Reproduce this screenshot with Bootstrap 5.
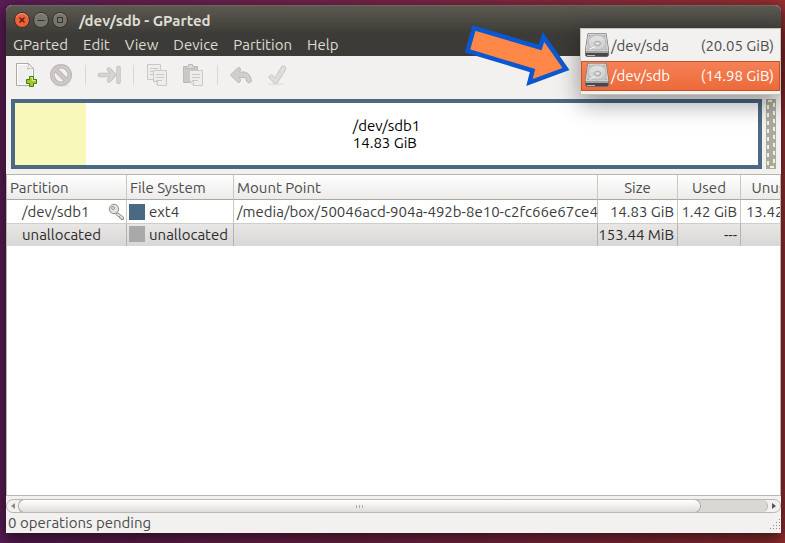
<!DOCTYPE html>
<html lang="en">
<head>
<meta charset="utf-8">
<meta name="viewport" content="width=device-width, initial-scale=1">
<title>/dev/sdb - GParted</title>
<link href="https://cdn.jsdelivr.net/npm/bootstrap@5.3.0/dist/css/bootstrap.min.css" rel="stylesheet">
<style>
  body {
    font-family: Ubuntu, "Noto Sans", sans-serif;
    font-size: 15px;
    line-height: 17px;
    color: #3c3c3c;
    background: linear-gradient(90deg, #5c1d58, #7a2548 50%, #992f31);
  }
  .desktop { padding: 5px 4px 10px 6px; overflow: hidden; }
  .app-window {
    background: #f2f1f0;
    border-radius: 6px 6px 0 0;
    box-shadow: 0 6px 18px 2px rgba(0, 0, 0, .6);
    min-width: 0;
  }
  .app-head {
    background: linear-gradient(#5c5950, #3c3b37 28px);
    border-radius: 6px 6px 0 0;
    border-top: 1px solid #6b685f;
    color: #dfdbd2;
  }
  .title-bar { height: 28px; padding: 0 8px; gap: 3px; }
  .title-bar h1 { font-size: 15px; line-height: 17px; padding-left: 8px; }
  .wm-btn, .tool-btn, .menu-btn, .scroll-btn { border: 0; background: none; color: inherit; }
  .wm-btn svg { width: 16px; height: 16px; }
  .menu-bar { height: 22px; gap: 1px; padding-bottom: 2px; }
  .menu-btn { padding: 0 7px; }
  .tool-bar { height: 38px; padding: 0 1px; }
  .tool-btn { padding: 0 6px; }
  .tool-btn svg { width: 24px; height: 24px; }
  .tool-sep { width: 1px; height: 20px; margin: 0 5px 0 6px; background: #dbd8d4; }
  .disk-map { padding: 5px; gap: 4px; }
  .disk-part { height: 70px; border: 4px solid #4b6983; background: #fff; color: #000; }
  .disk-used { width: 71px; background: #f8f8ba; }
  .disk-label { inset: 0; }
  .disk-free { width: 10px; height: 70px; }
  .list-pane { background: #fff; border: 1px solid #b9b5ae; }
  .part-table { width: 807px; table-layout: fixed; border-collapse: separate; border-spacing: 0; white-space: nowrap; }
  .part-table th, .part-table td { border-right: 1px solid #c9c7c3; padding: 0 3px; }
  .part-table th { height: 25px; padding-top: 1px; font-weight: 400; color: #4c4c4c; background: linear-gradient(#fff, #ecebe9); border-bottom: 1px solid #a9a9a2; }
  .part-table td { height: 23px; }
  .part-table td:first-child { padding-left: 15px; padding-right: 0; }
  .part-table .mount-cell { padding-right: 0; }
  .part-table .text-end { padding-left: 0; }
  .part-table .row-sel td { padding-bottom: 2px; background: linear-gradient(#e9e7e6, #d9d7d5); border-top: 1px solid #d0cecb; border-right-color: #b5b3b0; color: #2c2c2c; }
  .swatch { width: 16px; height: 16px; flex: none; }
  .sw-ext4 { background: #4b6983; }
  .sw-none { background: #a9a9a9; }
  .fs-cell { gap: 4px; margin-left: -1px; }
  .scroll-row { margin-top: 3px; height: 14px; border: 1px solid #bab7b3; border-radius: 7px; background: #f2f1f0; overflow: hidden; }
  .scroll-btn { width: 12px; padding: 0; line-height: 0; }
  .scroll-track { background: #dad8d5; border-radius: 0 7px 7px 0; border-right: 1px solid #bab7b3; }
  .scroll-thumb { width: 91%; background: linear-gradient(#fff, #dfddda); border-radius: 7px; box-shadow: 0 0 0 1px #aaa7a2; gap: 2px; }
  .scroll-thumb i { width: 1px; height: 3px; background: #b0ada8; }
  .status-bar { height: 20px; padding: 0 0 2px 2px; color: #4c4c4c; }
  .disk-menu {
    top: 23px; right: 0; width: 201px; padding: 2px 0 3px;
    border: 1px solid #c5c2b8; border-radius: 0; background: #f2f1f0;
    box-shadow: 0 8px 24px rgba(0, 0, 0, .4);
    font-size: 15px;
  }
  .disk-menu .dropdown-item { height: 30px; padding: 0 5px 2px 2px; border: 1px solid transparent; color: #4c4c4c; gap: 1px; }
  .disk-menu .dropdown-item.active { color: #fff; background: linear-gradient(#f58156, #ec6a3a); border-color: #c4532b; }
  .disk-menu svg { width: 26px; height: 26px; }
  .pointer-arrow { top: 15px; right: 209px; width: 112px; height: 70px; z-index: 1001; pointer-events: none; }
</style>
<script src="https://cdn.jsdelivr.net/npm/bootstrap@5.3.0/dist/js/bootstrap.bundle.min.js"></script>
</head>
<body>
<div class="desktop vh-100 d-flex">
<main class="app-window position-relative d-flex flex-column flex-grow-1">

  <svg class="d-none" aria-hidden="true">
    <symbol id="hdd" viewBox="0 0 26 26">
      <path d="M4 1.500h18L24.500 18v5.500l-1 1h-21l-1-1V18z" fill="#777" stroke="#757575"/>
      <path d="M4.500 2h17l2.500 17H2z" fill="#c6c6c6" stroke="#e9e9e9" stroke-width=".7"/>
      <path d="M2 20h22v3.500l-1 .8H3l-1-.8z" fill="#484848"/>
      <path d="M2 19.500h22v1.500H2z" fill="#a5a5a5"/>
      <path d="M3 23.500h8" stroke="#bbb"/>
      <ellipse cx="13" cy="10.500" rx="9" ry="7.500" fill="#d4d4d4" stroke="#b0b0b0" stroke-width=".8"/>
      <path d="M5 9C8 3 16 2 20.500 7l-6 4z" fill="#dedede"/>
      <ellipse cx="13.500" cy="11.500" rx="3.200" ry="2.300" fill="#cfcfcf" stroke="#a2a2a2" stroke-width=".8"/>
      <circle cx="13.500" cy="11.500" r=".8" fill="#fff"/>
      <path d="M5.500 17l6-2.500" stroke="#f7f7f7"/>
      <path d="M5 3.500h1M20 3.500h1M3.500 17.500h1M21.500 17.500h1" stroke="#999"/>
    </symbol>
  </svg>

  <header class="app-head">
    <div class="title-bar d-flex align-items-center">
      <button class="wm-btn p-0 d-flex" type="button" aria-label="Close">
        <svg viewBox="0 0 16 16"><circle cx="8" cy="8" r="7.500" fill="#ee6139" stroke="#33312c"/><path d="M2 5a7 7 0 0 1 12 0" fill="none" stroke="#f79a78"/><path d="M5.500 5.500l5 5m0-5l-5 5" stroke="#4a1c10" stroke-width="1.300"/></svg>
      </button>
      <button class="wm-btn p-0 d-flex" type="button" aria-label="Minimize">
        <svg viewBox="0 0 16 16"><circle cx="8" cy="8" r="7.500" fill="#77756e" stroke="#33312c"/><path d="M2 5a7 7 0 0 1 12 0" fill="none" stroke="#96938b"/><path d="M4.500 8.500h7" stroke="#33312c"/></svg>
      </button>
      <button class="wm-btn p-0 d-flex" type="button" aria-label="Maximize">
        <svg viewBox="0 0 16 16"><circle cx="8" cy="8" r="7.500" fill="#77756e" stroke="#33312c"/><path d="M2 5a7 7 0 0 1 12 0" fill="none" stroke="#96938b"/><path d="M5.500 5.500h5v5h-5z" fill="none" stroke="#33312c"/></svg>
      </button>
      <h1 class="m-0 fw-bold">/dev/sdb - GParted</h1>
    </div>
    <nav class="menu-bar d-flex align-items-center" aria-label="Main menu">
      <button class="menu-btn" type="button">GParted</button>
      <button class="menu-btn" type="button">Edit</button>
      <button class="menu-btn" type="button">View</button>
      <button class="menu-btn" type="button">Device</button>
      <button class="menu-btn" type="button">Partition</button>
      <button class="menu-btn" type="button">Help</button>
    </nav>
  </header>

  <div class="tool-bar d-flex align-items-center flex-shrink-0" role="toolbar" aria-label="Partition tools">
    <button class="tool-btn d-flex" type="button" aria-label="New">
      <svg viewBox="0 0 24 24"><path d="M3.500 .5h12l5 5v17h-17z" fill="#efefee" stroke="#a9aaa7"/><path d="M4.500 1.500h10v4h5v16h-15z" fill="none" stroke="#fff"/><path d="M15 .5c1 1.500 0 3 -.5 5.500 2-1 4.500-1 6-.5z" fill="#fff" stroke="#a9aaa7" stroke-width=".8"/><path d="M16.500 13.500h4v3h3v4h-3v3h-4v-3h-3v-4h3z" fill="#9fca33" stroke="#4e7a06"/><path d="M17.500 14.500h2v3h3" fill="none" stroke="#d8ef93"/></svg>
    </button>
    <button class="tool-btn d-flex" type="button" aria-label="Delete" disabled>
      <svg viewBox="0 0 24 24"><ellipse cx="12" cy="22.500" rx="8" ry="1.200" fill="#e6e4e2"/><circle cx="12" cy="12" r="8.700" fill="none" stroke="#bbb5b3" stroke-width="4.600"/><path d="M6 6l12 12" stroke="#bbb5b3" stroke-width="4.600"/><circle cx="12" cy="12" r="8.700" fill="none" stroke="#cdc8c6" stroke-width="2.800"/><path d="M6 6l12 12" stroke="#cdc8c6" stroke-width="2.800"/></svg>
    </button>
    <span class="tool-sep"></span>
    <button class="tool-btn d-flex" type="button" aria-label="Resize/Move" disabled>
      <svg viewBox="0 0 24 24" stroke-linejoin="round" stroke-linecap="round" fill="none"><path d="M3 12h13M12 6.500L17 12l-5 5.500M21.500 5v14" stroke="#c2bdbb" stroke-width="4.400"/><path d="M3 12h13M12 6.500L17 12l-5 5.500M21.500 5v14" stroke="#d7d3d1" stroke-width="2.800"/></svg>
    </button>
    <span class="tool-sep"></span>
    <button class="tool-btn d-flex" type="button" aria-label="Copy" disabled>
      <svg viewBox="0 0 24 24" fill="#eeedeb" stroke="#cbc8c5"><path d="M2.500 1.500h13v15h-13z"/><path d="M5 5.500h8M5 8.500h3M5 11.500h3" /><path d="M8.500 7.500h13v15h-9l-4-4z"/><path d="M11 11.500h8M11 14.500h8M11 17.500h6"/><path d="M8.500 18.500h4v4"/></svg>
    </button>
    <button class="tool-btn d-flex" type="button" aria-label="Paste" disabled>
      <svg viewBox="0 0 24 24" stroke="#bcb8b5"><path d="M2.500 3.500h14v16h-14z" fill="#cac7c4"/><path d="M5.500 5.500v-2h2v-2h4v2h2v2z" fill="#dedcd9"/><path d="M8.500 7.500h13v15h-9l-4-4z" fill="#eeedeb" stroke="#cbc8c5"/><path d="M11 11.500h8M11 14.500h8M11 17.500h6M8.500 18.500h4v4" fill="none" stroke="#cbc8c5"/></svg>
    </button>
    <span class="tool-sep"></span>
    <button class="tool-btn d-flex" type="button" aria-label="Undo" disabled>
      <svg viewBox="0 0 24 24"><path d="M1.500 12L9 4.500l2 .5.500 2-1.500 2h4c5 0 8 4 8.500 9l-1.500 1.700h-2l-1.500-1.700c0-3-1.500-3.500-3.500-3.500h-4l1.500 2-.5 2.500-2 .5z" fill="#d3cecc" stroke="#bcb7b5" stroke-linejoin="round"/></svg>
    </button>
    <button class="tool-btn d-flex" type="button" aria-label="Apply" disabled>
      <svg viewBox="0 0 24 24"><ellipse cx="11" cy="21" rx="9" ry="1.500" fill="#e8e6e4"/><path d="M3.500 14l3-2.500 3.500 3.500 7-12 3 .5 1 2.500-8.500 13.500-2.500 1.500z" fill="#deddda" stroke="#c7c6c2" stroke-linejoin="round"/></svg>
    </button>
  </div>

  <section class="disk-map d-flex" aria-label="Disk layout">
    <div class="disk-part d-flex position-relative flex-grow-1">
      <div class="disk-used"></div>
      <div class="disk-label position-absolute d-flex align-items-center justify-content-center">
        <div>/dev/sdb1<br>14.83 GiB</div>
      </div>
    </div>
    <svg class="disk-free flex-shrink-0" viewBox="0 0 10 70" role="img" aria-label="unallocated"><path d="M0 0h10v70H0z" fill="#a8a8a8"/><path d="M2 2h6v66H2z" fill="none" stroke="#f7f7b5" stroke-width="2" stroke-dasharray="4 4"/></svg>
  </section>

  <section class="list-pane flex-grow-1 overflow-hidden">
    <table class="part-table">
      <colgroup><col style="width:120px"><col style="width:107px"><col style="width:364px"><col style="width:80px"><col style="width:63px"><col style="width:73px"></colgroup>
      <thead>
        <tr><th scope="col">Partition</th><th scope="col">File System</th><th scope="col">Mount Point</th><th scope="col" class="text-center">Size</th><th scope="col" class="text-center">Used</th><th scope="col" class="text-center">Unused</th></tr>
      </thead>
      <tbody>
        <tr>
          <td><div class="d-flex align-items-center justify-content-between">/dev/sdb1
            <svg width="18" height="18" viewBox="0 0 18 18" aria-label="mounted"><path d="M9 9.500l6.500 4.500v2.500h-2.500v-1.500h-1.500v-1.500h-1.500l-2-2z" fill="#e3e3df" stroke="#8c8d88" stroke-linejoin="round"/><circle cx="6" cy="6" r="4.700" fill="#e3e3df" stroke="#8c8d88"/><circle cx="5" cy="5" r="1.400" fill="#fff" stroke="#8c8d88"/></svg></div></td>
          <td><div class="fs-cell d-flex align-items-center"><span class="swatch sw-ext4"></span>ext4</div></td>
          <td class="mount-cell">/media/box/50046acd-904a-492b-8e10-c2fc66e67ce4</td>
          <td class="text-end">14.83 GiB</td><td class="text-end">1.42 GiB</td><td class="text-end">13.42 GiB</td>
        </tr>
        <tr class="row-sel">
          <td>unallocated</td>
          <td><div class="fs-cell d-flex align-items-center"><span class="swatch sw-none"></span>unallocated</div></td>
          <td></td>
          <td class="text-end">153.44 MiB</td><td class="text-end">---</td><td></td>
        </tr>
      </tbody>
    </table>
  </section>

  <div class="scroll-row d-flex flex-shrink-0">
    <button class="scroll-btn" type="button" aria-label="Scroll left"><svg width="4" height="6" viewBox="0 0 4 6"><path d="M4 0v6L0 3z" fill="#8f8c87"/></svg></button>
    <div class="scroll-track flex-grow-1">
      <div class="scroll-thumb h-100 d-flex align-items-center justify-content-center"><i></i><i></i><i></i></div>
    </div>
    <button class="scroll-btn" type="button" aria-label="Scroll right"><svg width="4" height="6" viewBox="0 0 4 6"><path d="M0 0v6l4-3z" fill="#555"/></svg></button>
  </div>
  <footer class="status-bar d-flex align-items-center flex-shrink-0">
    <span class="flex-grow-1">0 operations pending</span>
    <svg class="align-self-end" width="12" height="12" viewBox="0 0 12 12" aria-hidden="true"><path d="M10 0h1v1h-1zM7 3h1v1h-1zM10 3h1v1h-1zM4 6h1v1h-1zM7 6h1v1h-1zM10 6h1v1h-1zM1 9h1v1h-1zM4 9h1v1h-1zM7 9h1v1h-1zM10 9h1v1h-1z" fill="#8f8c87"/></svg>
  </footer>

  <div class="disk-menu dropdown-menu show" role="menu" aria-label="Device">
    <button class="dropdown-item d-flex align-items-center" type="button" role="menuitem"><svg aria-hidden="true"><use href="#hdd"/></svg><span class="flex-grow-1">/dev/sda</span><span>(20.05 GiB)</span></button>
    <button class="dropdown-item active d-flex align-items-center" type="button" role="menuitem"><svg aria-hidden="true"><use href="#hdd"/></svg><span class="flex-grow-1">/dev/sdb</span><span>(14.98 GiB)</span></button>
  </div>

  <svg class="pointer-arrow position-absolute" viewBox="460 20 112 70" aria-hidden="true"><path d="M474 28l66 19.500 3.500-10.500L566 69l-36.500 13.500 3-12L467.500 51z" fill="#ff8848" stroke="#0b57d0" stroke-width="4.500"/></svg>
</main>
</div>
</body>
</html>
